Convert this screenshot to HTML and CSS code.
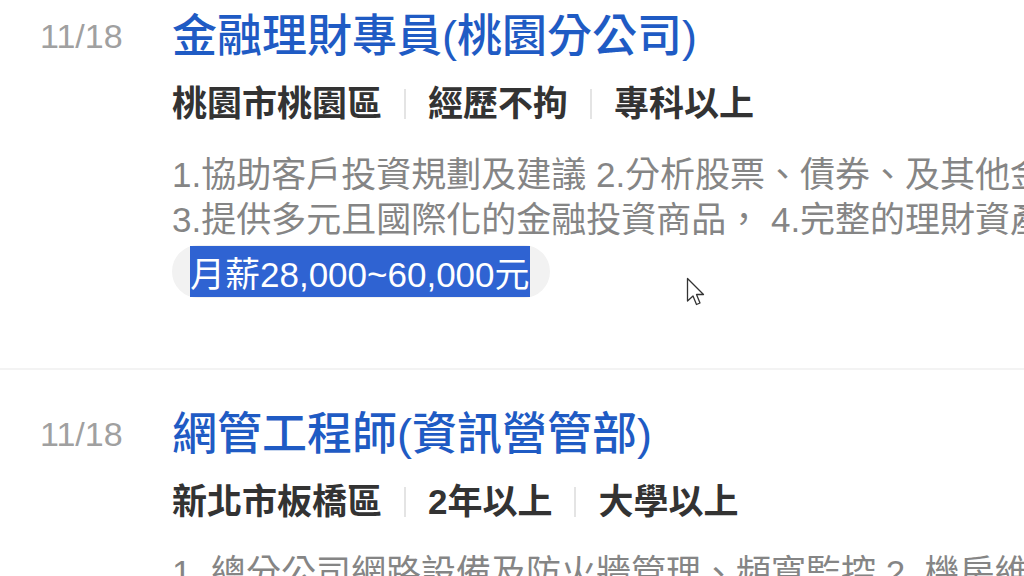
FILE: index.html
```html
<!DOCTYPE html>
<html lang="zh-Hant">
<head>
<meta charset="utf-8">
<title>職缺列表</title>
<link rel="stylesheet" href="styles.css">
</head>
<body>
<div class="list">
  <div class="job">
    <div class="date">11/18</div>
    <div class="content">
      <div class="title">金融理財專員(桃園分公司)</div>
      <div class="meta"><span>桃園市桃園區</span><i class="sep"></i><span>經歷不拘</span><i class="sep"></i><span>專科以上</span></div>
      <div class="desc">1.協助客戶投資規劃及建議 2.分析股票、債券、及其他金融商品之投資價值<br>3.提供多元且國際化的金融投資商品， 4.完整的理財資產配置服務</div>
      <div class="tag"><span class="sel">月薪28,000~60,000元</span></div>
    </div>
  </div>
  <div class="job">
    <div class="date">11/18</div>
    <div class="content">
      <div class="title">網管工程師(資訊營管部)</div>
      <div class="meta"><span>新北市板橋區</span><i class="sep"></i><span>2年以上</span><i class="sep"></i><span>大學以上</span></div>
      <div class="desc">1. 總分公司網路設備及防火牆管理、頻寬監控 2. 機房維護及設備管理</div>
    </div>
  </div>
</div>
<svg class="cursor" width="22" height="32" viewBox="0 0 22 32">
  <path d="M1.5 1.5 L1.5 24 L7 19 L10.5 27.5 L14 26 L10.5 17.5 L17.5 17.5 Z" fill="#ffffff" stroke="#333333" stroke-width="1.3" stroke-linejoin="round"/>
</svg>
</body>
</html>
```
FILE: styles.css
```css
html, body {
  margin: 0;
  padding: 0;
  background: #ffffff;
}
body {
  width: 1024px;
  height: 576px;
  overflow: hidden;
  position: relative;
  font-family: "Liberation Sans", "Noto Sans CJK TC", sans-serif;
}
.list {
  margin-top: -28px;
}
.job {
  display: flex;
  padding: 35px 0 70px 40px;
  border-bottom: 2px solid #f3f3f3;
}
.date {
  width: 132px;
  flex: none;
  margin-top: 9px;
  font-size: 34px;
  line-height: 40px;
  color: #a0a0a0;
}
.content {
  flex: 1;
  min-width: 0;
  overflow: hidden;
}
.title {
  font-size: 45px;
  line-height: 60px;
  color: #1f5bc4;
  font-weight: 500;
  white-space: nowrap;
}
.meta {
  display: flex;
  align-items: center;
  margin-top: 14px;
  font-size: 35px;
  line-height: 45px;
  font-weight: 700;
  color: #333333;
  white-space: nowrap;
}
.sep {
  width: 2px;
  height: 30px;
  background: #e4e4e4;
  margin: 0 22px;
}
.desc {
  margin-top: 26px;
  font-size: 35px;
  line-height: 45px;
  color: #858585;
  white-space: nowrap;
}
.tag {
  display: inline-flex;
  align-items: center;
  height: 53px;
  margin-top: 3px;
  padding: 0 20px 0 18px;
  border-radius: 27px;
  background: #f2f2f2;
  font-size: 35px;
  white-space: nowrap;
}
.sel {
  background: #2f63d2;
  color: #ffffff;
}
.cursor {
  position: absolute;
  left: 686px;
  top: 277px;
}
```
